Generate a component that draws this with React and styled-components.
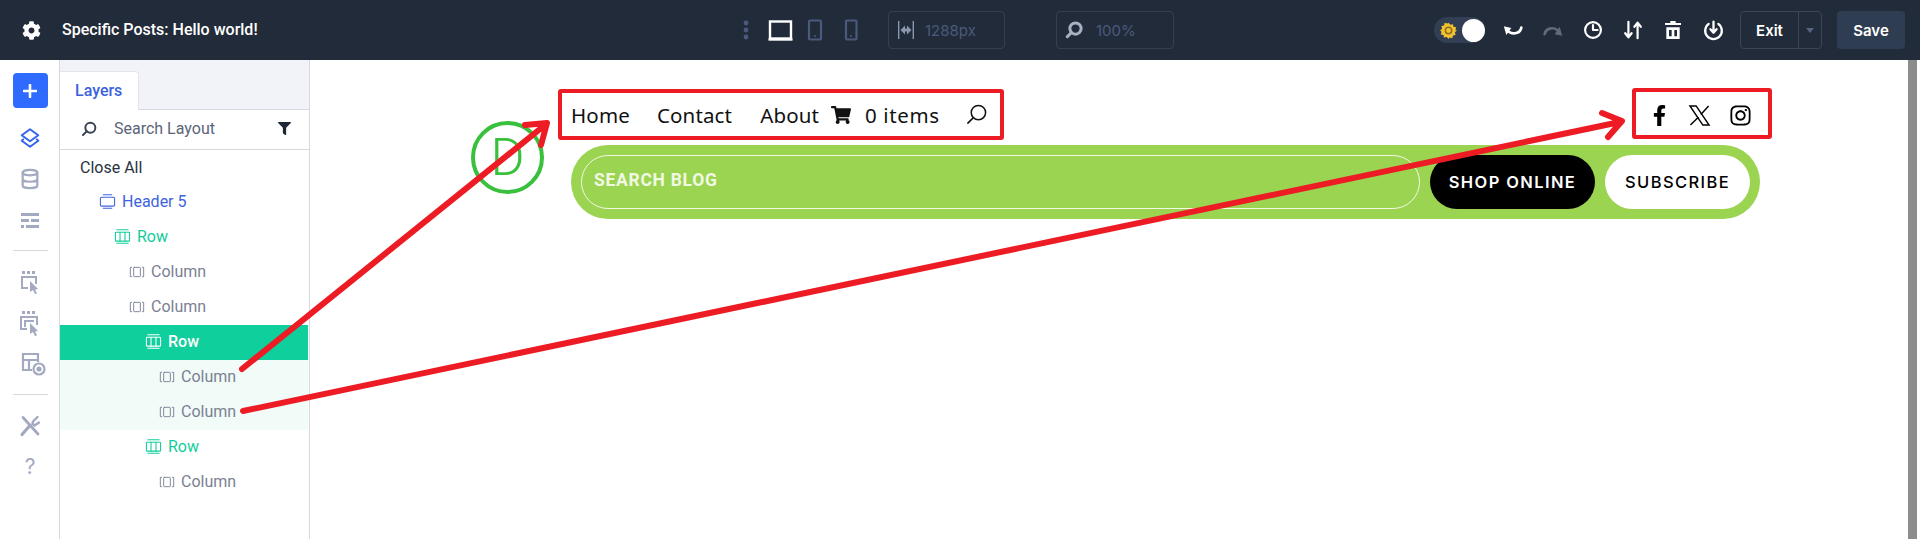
import React from "react";
import styled, { createGlobalStyle } from "styled-components";
import { FaCog, FaFilter, FaShoppingCart, FaFacebookF, FaInstagram } from "react-icons/fa";

const Global = createGlobalStyle`
  html, body { margin: 0; padding: 0; background: #fff; overflow: hidden; }
  * { box-sizing: border-box; }
  body { font-family: Inter, "Liberation Sans", sans-serif; }
`;

// Page frame
const Page = styled.div`
  position: relative;
  width: 1920px;
  height: 539px;
  display: flex;
  flex-direction: column;
  overflow: hidden;
`;
const Body = styled.div`
  flex: 1;
  display: flex;
  min-height: 0;
`;

// Top bar
const TopBar = styled.header`
  height: 60px;
  flex: none;
  background: #222b3a;
  display: flex;
  align-items: center;
  color: #fff;
`;
const GearSlot = styled.div`
  width: 62px;
  display: flex;
  justify-content: center;
  font-size: 19px;
`;
const Title = styled.div`
  width: 679px;
  padding-bottom: 1px;
  font-family: Roboto, sans-serif;
  font-size: 16px;
  font-weight: 500;
`;
const DeviceGroup = styled.div`
  display: flex;
  align-items: center;
  width: 147px;
`;
const ReadoutBox = styled.div`
  width: ${(p) => p.$w}px;
  height: 38px;
  margin-right: ${(p) => p.$mr}px;
  border: 1px solid #343f52;
  border-radius: 4px;
  display: flex;
  align-items: center;
  gap: 10px;
  padding-left: 8px;
  color: #4a5a7c;
  font-size: 15px;
`;
const ZoomGlyph = styled.span`
  display: flex;
  margin-right: 3px;
  color: #a8b2c4;
`;
const RightTools = styled.div`
  display: flex;
  align-items: center;
`;
const Toggle = styled.div`
  width: 51px;
  height: 26px;
  border-radius: 13px;
  background: #323e54;
  display: flex;
  align-items: center;
  justify-content: space-between;
  padding-left: 6px;
  margin-right: 8px;
`;
const Knob = styled.span`
  width: 23px;
  height: 23px;
  border-radius: 50%;
  background: #fff;
`;
const ToolSlot = styled.div`
  width: 40px;
  display: flex;
  justify-content: center;
  color: ${(p) => (p.$off ? "#5f6a7b" : "#fff")};
`;
const ExitBox = styled.div`
  width: 82px;
  height: 38px;
  margin-left: 7px;
  border: 1px solid #3a4559;
  border-radius: 4px;
  display: flex;
  font-size: 15px;
  font-weight: 600;
`;
const ExitLabel = styled.div`
  width: 58px;
  display: flex;
  align-items: center;
  justify-content: center;
  border-right: 1px solid #3a4559;
`;
const ExitCaret = styled.div`
  flex: 1;
  display: flex;
  align-items: center;
  justify-content: center;
  &::after {
    content: "";
    border: 4px solid transparent;
    border-top: 5px solid #56647d;
    border-bottom: 0;
  }
`;
const SaveButton = styled.div`
  width: 68px;
  height: 38px;
  margin-left: 15px;
  border-radius: 4px;
  background: #2f3d52;
  display: flex;
  align-items: center;
  justify-content: center;
  font-size: 15px;
  font-weight: 600;
`;

// Left rail
const Rail = styled.nav`
  width: 60px;
  flex: none;
  border-right: 1px solid #d6d9e0;
  padding: 13px 0 0 1px;
  display: flex;
  flex-direction: column;
  align-items: center;
`;
const AddButton = styled.div`
  width: 35px;
  height: 35px;
  margin-bottom: 9px;
  border-radius: 4px;
  background: #2f6bff;
  display: flex;
  align-items: center;
  justify-content: center;
`;
const RailSlot = styled.div`
  height: 41px;
  width: 100%;
  display: flex;
  align-items: center;
  justify-content: center;
  color: ${(p) => (p.$active ? "#3565ee" : "#a2a9c0")};
`;
const RailRule = styled.div`
  width: 35px;
  height: 1px;
  margin: 10px 0;
  background: #d6d9e0;
`;
const Help = styled.span`
  font-size: 21px;
  color: #a2a9c0;
`;

// Layers panel
const Panel = styled.aside`
  width: 250px;
  flex: none;
  border-right: 1px solid #d6d9e0;
`;
const TabStrip = styled.div`
  height: 50px;
  padding-top: 11px;
  background: #f1f3f8;
  border-bottom: 1px solid #d6d9e0;
`;
const Tab = styled.div`
  width: 79px;
  height: 39px;
  background: #fff;
  border: 1px solid #e2e5ec;
  border-left: 0;
  border-bottom: 0;
  border-radius: 0 4px 0 0;
  padding-left: 15px;
  line-height: 38px;
  font-family: Roboto, sans-serif;
  font-size: 16px;
  font-weight: 500;
  color: #3a62dc;
`;
const SearchRow = styled.div`
  height: 40px;
  border-bottom: 1px solid #d6d9e0;
  display: flex;
  align-items: center;
  padding: 0 18px 2px 21px;
  font-family: Roboto, sans-serif;
  font-size: 16px;
  color: #5c6478;
`;
const SearchGlyph = styled.span`
  display: flex;
  color: #3a4356;
`;
const SearchLabel = styled.span`
  flex: 1;
  margin-left: 17px;
`;
const LayerRow = styled.div`
  height: 35px;
  display: flex;
  align-items: center;
  gap: 6px;
  width: 248px;
  padding: 0 0 ${(p) => (p.$kind === "plain" ? 0 : 2)}px ${(p) => p.$indent}px;
  font-family: Roboto, sans-serif;
  font-size: 16px;
  font-weight: ${(p) => (p.$active ? 500 : 400)};
  color: ${(p) => rowColor(p)};
  background: ${(p) => (p.$active ? "#0fcf9d" : p.$tint ? "#f1fbf8" : "transparent")};
`;
function rowColor(p) {
  if (p.$active) return "#fff";
  if (p.$kind === "header") return "#3e63dd";
  if (p.$kind === "row") return "#12cd9b";
  if (p.$kind === "plain") return "#2b3240";
  return "#7a8194";
}

// Canvas
const Canvas = styled.main`
  flex: 1;
  display: flex;
  justify-content: space-between;
  min-width: 0;
`;
const SiteHeader = styled.div`
  display: flex;
  gap: 14px;
  align-items: flex-start;
  padding: 28px 0 0 161px;
`;
const Logo = styled.div`
  width: 73px;
  height: 73px;
  margin-top: 33px;
  border: 4px solid #39c13e;
  border-radius: 50%;
  display: flex;
  align-items: center;
  justify-content: center;
  font-family: Roboto, sans-serif;
  font-size: 52px;
  font-weight: 300;
  color: #39c13e;
`;
const SiteColumn = styled.div`
  width: 1214px;
`;
const TopRow = styled.div`
  display: flex;
  justify-content: space-between;
  height: 52px;
`;
const Annotated = styled.div`
  height: 51px;
  border: 4px solid #ed1c24;
  border-radius: 3px;
  display: flex;
  align-items: center;
`;
const MenuBox = styled(Annotated)`
  width: 446px;
  margin-top: 1px;
  padding-left: 9px;
  font-family: "Noto Sans", sans-serif;
  font-size: 20.5px;
  letter-spacing: 0.15px;
  color: #111;
`;
const SocialBox = styled(Annotated)`
  width: 140px;
  padding: 3px 0 0 13px;
  gap: 18px;
  color: #000;
`;
const MenuLink = styled.span`
  margin-right: ${(p) => p.$mr}px;
  margin-left: ${(p) => p.$ml || 0}px;
  letter-spacing: ${(p) => p.$ls || 0.15}px;
`;
const Pill = styled.div`
  height: 74px;
  margin: 5px 12px 0 13px;
  padding: 10px;
  background: #9bd451;
  border-radius: 37px;
  display: flex;
  gap: 10px;
`;
const SearchField = styled.div`
  flex: 1;
  border: 1px solid #f1f8e3;
  border-radius: 27px;
  padding: 0 0 4px 12px;
  display: flex;
  align-items: center;
  font-family: Roboto, sans-serif;
  font-size: 17.5px;
  font-weight: 700;
  letter-spacing: 0.7px;
  color: #f1f8e3;
`;
const PillButton = styled.div`
  width: ${(p) => p.$w}px;
  border-radius: 27px;
  background: ${(p) => (p.$dark ? "#000" : "#fff")};
  color: ${(p) => (p.$dark ? "#fff" : "#000")};
  display: flex;
  align-items: center;
  justify-content: center;
  font-size: 16.5px;
  font-weight: ${(p) => (p.$dark ? 600 : 500)};
  letter-spacing: 1.4px;
`;
const ScrollBar = styled.div`
  width: 9px;
  margin-right: 3px;
  background: #8c8c8c;
`;

// Red arrows drawn on top of everything
const ArrowLayer = styled.svg`
  position: absolute;
  left: 0;
  top: 0;
  pointer-events: none;
`;

const Ico = ({ size = 22, sw = 2, children, ...rest }) => (
  <svg width={size} height={size} viewBox="0 0 24 24" fill="none" stroke="currentColor"
    strokeWidth={sw} strokeLinecap="round" strokeLinejoin="round" {...rest}>
    {children}
  </svg>
);

const Magnifier = ({ size = 16, sw = 3 }) => (
  <Ico size={size} sw={sw}>
    <circle cx="14" cy="10" r="7.5" />
    <path d="M8.5 15.5 3 21" />
  </Ico>
);

const HeaderGlyph = () => (
  <Ico size={17} sw={1.5}>
    <path d="M6 2.5h12M6 21.5h12" />
    <rect x="2" y="6" width="20" height="12.5" rx="1.5" />
  </Ico>
);
const RowGlyph = () => (
  <Ico size={17} sw={1.5}>
    <path d="M4 2.5h16M4 21.5h16M8.5 6v12.5M15.5 6v12.5" />
    <rect x="2" y="6" width="20" height="12.5" rx="1" />
  </Ico>
);
const ColumnGlyph = () => (
  <Ico size={16} sw={1.4}>
    <path d="M4 5H2v14h2M20 5h2v14h-2" />
    <rect x="7" y="5" width="10" height="14" rx="1" />
  </Ico>
);

const XLogo = () => (
  <svg width="23" height="23" viewBox="0 0 24 24" fill="none" stroke="currentColor" strokeWidth="1.5">
    <path d="M2 2h6.500L22 22h-6.500z" />
    <path d="M21.500 2 13.400 11M10.800 13.800 2.500 22" />
  </svg>
);

const layers = [
  { label: "Close All", kind: "plain", indent: 20 },
  { label: "Header 5", kind: "header", indent: 39, Glyph: HeaderGlyph },
  { label: "Row", kind: "row", indent: 54, Glyph: RowGlyph },
  { label: "Column", kind: "column", indent: 69, Glyph: ColumnGlyph },
  { label: "Column", kind: "column", indent: 69, Glyph: ColumnGlyph },
  { label: "Row", kind: "row", indent: 85, Glyph: RowGlyph, active: true },
  { label: "Column", kind: "column", indent: 99, Glyph: ColumnGlyph, tint: true },
  { label: "Column", kind: "column", indent: 99, Glyph: ColumnGlyph, tint: true },
  { label: "Row", kind: "row", indent: 85, Glyph: RowGlyph },
  { label: "Column", kind: "column", indent: 99, Glyph: ColumnGlyph },
];

export default function App() {
  return (
    <Page>
      <Global />
      <TopBar>
        <GearSlot><FaCog /></GearSlot>
        <Title>Specific Posts: Hello world!</Title>
        <DeviceGroup>
          <svg width="147" height="24" viewBox="0 0 147 24" fill="none">
            <g fill="#4a5a7c">
              <circle cx="5" cy="5" r="2.4" />
              <circle cx="5" cy="12" r="2.4" />
              <circle cx="5" cy="19" r="2.4" />
            </g>
            <rect x="29" y="3.5" width="21" height="17" stroke="#fff" strokeWidth="2.4" />
            <path d="M27.500 21.500h24" stroke="#fff" strokeWidth="2.4" />
            <rect x="68" y="2.500" width="12" height="19" rx="1" stroke="#4a5a7c" strokeWidth="2.2" />
            <circle cx="74" cy="18" r="1" fill="#4a5a7c" />
            <rect x="105" y="2.500" width="10.500" height="19" rx="1" stroke="#4a5a7c" strokeWidth="2.2" />
            <circle cx="110" cy="18" r="1" fill="#4a5a7c" />
          </svg>
        </DeviceGroup>
        <ReadoutBox $w={117} $mr={51}>
          <svg width="18" height="20" viewBox="0 0 18 20" fill="#8a96ad">
            <path d="M1 1h1.400v18H1zM15.600 1H17v18h-1.400z" />
            <path d="M3.500 10 8 5.500v3h2v-3l4.500 4.500L10 14.500v-3H8v3z" />
          </svg>
          1288px
        </ReadoutBox>
        <ReadoutBox $w={118} $mr={260}>
          <ZoomGlyph><Magnifier size={18} sw={4} /></ZoomGlyph>
          100%
        </ReadoutBox>
        <RightTools>
          <Toggle>
            <svg width="17" height="17" viewBox="0 0 24 24">
              <path fill="#f2c230" d="M12 1l2.500 3 3.800-1 .7 3.800 3.800.7-1 3.800L24 12l-3 2.500 1 3.800-3.800.7-.7 3.800-3.800-1L12 24l-2.500-3-3.800 1-.7-3.800-3.800-.7 1-3.800L0 12l3-2.500-1-3.800 3.800-.7.7-3.800 3.800 1z" />
              <circle cx="12" cy="12" r="4.500" fill="none" stroke="#8a6f1e" strokeWidth="2" />
            </svg>
            <Knob />
          </Toggle>
          <ToolSlot>
            <svg width="20" height="20" viewBox="0 0 24 24">
              <path d="M22 9c-1 7-10 9-15 5" fill="none" stroke="currentColor" strokeWidth="3.200" strokeLinecap="round" />
              <path d="M1 7.500 10 9.500 4 18z" fill="currentColor" />
            </svg>
          </ToolSlot>
          <ToolSlot $off>
            <svg width="20" height="20" viewBox="0 0 24 24">
              <path d="M2 17c1-7 10-9 15-5" fill="none" stroke="currentColor" strokeWidth="3.200" strokeLinecap="round" />
              <path d="M23 19 14 17 20 8z" fill="currentColor" />
            </svg>
          </ToolSlot>
          <ToolSlot>
            <Ico size={20} sw={2.600}><circle cx="12" cy="12" r="9.500" /><path d="M12 6v6h5.500" /></Ico>
          </ToolSlot>
          <ToolSlot>
            <Ico size={22} sw={2.400}><path d="M7 3v16M3.500 15.500 7 20l3.500-4.500" /><path d="M17 21V5M13.500 8.500 17 4l3.500 4.500" /></Ico>
          </ToolSlot>
          <ToolSlot>
            <svg width="16" height="18" viewBox="0 0 18 20" fill="currentColor">
              <path d="M6 0h6v2h6v2.500H0V2h6z" />
              <path fillRule="evenodd" d="M1.500 7h15v13h-15zM4.500 10v7h3v-7zM10.500 10v7h3v-7z" />
            </svg>
          </ToolSlot>
          <ToolSlot>
            <Ico size={21} sw={2.600}><path d="M6.500 4.500a9.500 9.500 0 1 0 11 0" /><path d="M12 2v12M8.500 10.500 12 14.500l3.500-4" /></Ico>
          </ToolSlot>
          <ExitBox><ExitLabel>Exit</ExitLabel><ExitCaret /></ExitBox>
          <SaveButton>Save</SaveButton>
        </RightTools>
      </TopBar>

      <Body>
        <Rail>
          <AddButton>
            <svg width="14" height="14" viewBox="0 0 14 14"><path d="M7 1v12M1 7h12" stroke="#fff" strokeWidth="2.600" strokeLinecap="round" /></svg>
          </AddButton>
          <RailSlot $active>
            <Ico sw={2.200}><path d="M12 2.500 21 9l-9 6.500L3 9z" /><path d="M4.500 13.500 3 15l9 6.500 9-6.500-1.500-1.500" /></Ico>
          </RailSlot>
          <RailSlot>
            <Ico sw={2.400}><ellipse cx="12" cy="5" rx="8" ry="3" /><path d="M4 5v14c0 1.700 3.600 3 8 3s8-1.300 8-3V5M4 12c0 1.700 3.600 3 8 3s8-1.300 8-3" /></Ico>
          </RailSlot>
          <RailSlot>
            <svg width="20" height="20" viewBox="0 0 20 20" fill="currentColor">
              <path d="M1 3h18v3H1zM1 9h8v3H1zM11 9h8v3h-8zM1 15h3v3H1zM6 15h13v3H6z" />
            </svg>
          </RailSlot>
          <RailRule />
          <RailSlot>
            <svg width="22" height="24" viewBox="0 0 22 24" fill="currentColor">
              <path d="M3 1h3v3H3zM8 1h3v3H8zM13 1h3v3h-3z" />
              <path d="M2 6h16v8h-2V8H4v9h5v2H2z" />
              <path d="M11 11l8 8-3 .5 2 4-2 .5-2-4-3 2z" />
            </svg>
          </RailSlot>
          <RailSlot>
            <svg width="22" height="26" viewBox="0 0 22 26" fill="currentColor">
              <path d="M3 1h3v3H3zM8 1h3v3H8zM13 1h3v3h-3z" />
              <path d="M1 6h18v9h-2V8H3v10h5v2H1z" />
              <path d="M5 10h10v2H7v5H5z" />
              <path d="M11 13l8 8-3 .5 2 4-2 .5-2-4-3 2z" />
            </svg>
          </RailSlot>
          <RailSlot>
            <svg width="26" height="26" viewBox="0 0 26 26" fill="none" stroke="currentColor" strokeWidth="2.200" style={{ marginLeft: 6 }}>
              <path d="M12 19H3V3h15v8M3 9h15M9 9v10" />
              <circle cx="19" cy="18" r="5.500" />
              <circle cx="19" cy="18" r="1.500" fill="currentColor" />
            </svg>
          </RailSlot>
          <RailRule />
          <RailSlot>
            <svg width="22" height="22" viewBox="0 0 22 22" fill="none" stroke="currentColor" strokeLinecap="round">
              <path d="M4 2.500 19 19" strokeWidth="2.800" />
              <path d="M18.500 2 14 6.500l-.5 2.500 2 1.500 4.500-3" strokeWidth="2.400" />
              <path d="M11 10.500 3 19.500" strokeWidth="3.200" />
            </svg>
          </RailSlot>
          <RailSlot><Help>?</Help></RailSlot>
        </Rail>

        <Panel>
          <TabStrip><Tab>Layers</Tab></TabStrip>
          <SearchRow>
            <SearchGlyph><Magnifier size={16} /></SearchGlyph>
            <SearchLabel>Search Layout</SearchLabel>
            <FaFilter size={13} color="#1e2533" />
          </SearchRow>
          {layers.map(({ label, kind, indent, Glyph, active, tint }, i) => (
            <LayerRow key={i} $kind={kind} $indent={indent} $active={active} $tint={tint}>
              {Glyph && <Glyph />}
              {label}
            </LayerRow>
          ))}
        </Panel>

        <Canvas>
          <SiteHeader>
            <Logo>D</Logo>
            <SiteColumn>
              <TopRow>
                <MenuBox>
                  <MenuLink $mr={27}>Home</MenuLink>
                  <MenuLink $mr={28}>Contact</MenuLink>
                  <MenuLink $mr={12}>About</MenuLink>
                  <FaShoppingCart size={20} />
                  <MenuLink $ml={14} $mr={25} $ls={0.6}>0 items</MenuLink>
                  <Magnifier size={23} sw={1.600} />
                </MenuBox>
                <SocialBox>
                  <FaFacebookF size={21} />
                  <XLogo />
                  <FaInstagram size={23} />
                </SocialBox>
              </TopRow>
              <Pill>
                <SearchField>SEARCH BLOG</SearchField>
                <PillButton $dark $w={165}>SHOP ONLINE</PillButton>
                <PillButton $w={145}>SUBSCRIBE</PillButton>
              </Pill>
            </SiteColumn>
          </SiteHeader>
          <ScrollBar />
        </Canvas>
      </Body>

      <ArrowLayer width="1920" height="539" fill="none" stroke="#ed1c24" strokeWidth="6" strokeLinecap="round" strokeLinejoin="round">
        <path d="M242 369 545 125M525 125 547 123 541 145" />
        <path d="M243 411 1620 122M1602 113 1622 121 1608 137" />
      </ArrowLayer>
    </Page>
  );
}
